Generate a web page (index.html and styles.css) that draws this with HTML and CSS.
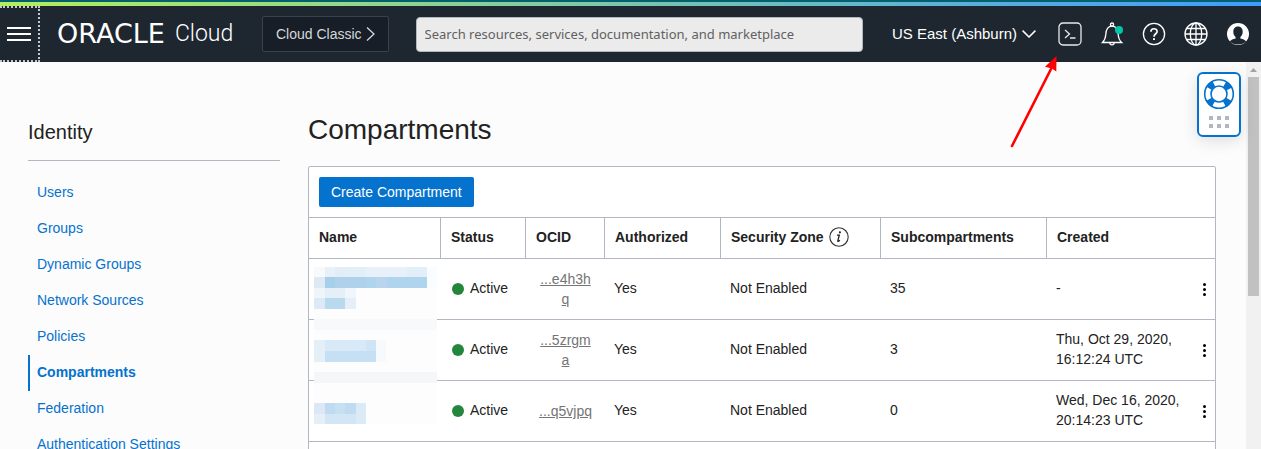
FILE: index.html
```html
<!DOCTYPE html>
<html lang="en">
<head>
<meta charset="utf-8">
<title>Compartments | Oracle Cloud</title>
<link rel="stylesheet" href="styles.css">
</head>
<body>
<div class="brand-strip"></div>
<header class="topbar">
  <button class="menu-button" type="button" aria-label="Open navigation menu">
    <svg width="24" height="14" viewBox="0 0 24 14"><path d="M0 1h24M0 7h24M0 13h24" stroke="#fff" stroke-width="2"/></svg>
  </button>
  <a class="logo" href="#"><span class="logo-oracle">ORACLE</span><span class="logo-cloud">Cloud</span></a>
  <button class="classic" type="button">Cloud Classic
    <svg width="9" height="14" viewBox="0 0 9 14"><path d="M1 .5l7 6.500-7 6.500" fill="none" stroke="#d5d8da" stroke-width="1.300"/></svg>
  </button>
  <input class="search" type="search" aria-label="Search" placeholder="Search resources, services, documentation, and marketplace">
  <button class="region" type="button">US East (Ashburn)
    <svg width="14" height="8" viewBox="0 0 14 8"><path d="M.6.6L7 7 13.400.6" fill="none" stroke="#fff" stroke-width="1.500"/></svg>
  </button>
  <nav class="tools" aria-label="Tools">
    <button type="button" aria-label="Cloud Shell">
      <svg width="24" height="24" viewBox="0 0 24 24" fill="none" stroke="#e8eaeb" stroke-width="1.300"><rect x="1" y="1" width="22" height="22" rx="4"/><path d="M7 8l4.500 4L7 16M12 16h5.500"/></svg>
    </button>
    <button type="button" aria-label="Notifications">
      <svg width="24" height="24" viewBox="0 0 24 24" fill="none" stroke="#fff" stroke-width="1.300"><circle cx="12" cy="2.600" r="1.600"/><path d="M2.500 20.500h19.200c-2.500-2.200-3.200-4-3.500-8C17.900 7.500 16.500 4.200 12 4.200S6.100 7.500 5.800 12.500c-.3 4-1 5.800-3.300 8z"/><path d="M9.800 20.800c.2 2.800 4.200 2.800 4.400 0"/><circle cx="19" cy="8" r="4" fill="#00c7a8" stroke="none"/></svg>
    </button>
    <button type="button" aria-label="Help">
      <svg width="24" height="24" viewBox="0 0 24 24" fill="none" stroke="#fff" stroke-width="1.300"><circle cx="12" cy="12" r="10.600"/><path d="M8.900 9.800c0-4 6.200-4 6.200-.3 0 2.300-3.100 2.300-3.100 5.300" stroke-width="1.700"/><path d="M12 16.200v1.900" stroke-width="2"/></svg>
    </button>
    <button type="button" aria-label="Language">
      <svg width="24" height="24" viewBox="0 0 24 24" fill="none" stroke="#fff" stroke-width="1.300"><circle cx="12" cy="12" r="11"/><ellipse cx="12" cy="12" rx="5.700" ry="11"/><path d="M12 1v22M1 12h22M2.500 6.500h19M2.500 17.500h19"/></svg>
    </button>
    <button type="button" aria-label="Profile">
      <svg width="24" height="24" viewBox="0 0 24 24"><circle cx="12" cy="12" r="11" fill="#fff"/><path d="M12 4.500c-3 0-4.700 2.200-4.700 5.200 0 2.600 1 4.200 2.300 5.300v1.500c-2.500.5-4.600 1.300-5.900 3C5.700 21.600 8.600 22.400 12 22.400s6.300-.8 8.300-2.900c-1.300-1.700-3.400-2.500-5.900-3V15c1.300-1.100 2.300-2.700 2.300-5.300 0-3-1.700-5.200-4.700-5.200z" fill="#1e2730"/></svg>
    </button>
  </nav>
</header>

<div class="viewport">
  <div class="page">
    <aside class="sidebar">
      <h2>Identity</h2>
      <nav aria-label="Identity">
        <a href="#">Users</a>
        <a href="#">Groups</a>
        <a href="#">Dynamic Groups</a>
        <a href="#">Network Sources</a>
        <a href="#">Policies</a>
        <a href="#" class="current" aria-current="page">Compartments</a>
        <a href="#">Federation</a>
        <a href="#">Authentication Settings</a>
      </nav>
    </aside>
    <main class="content">
      <h1>Compartments</h1>
      <section class="panel">
        <div class="actions"><button class="primary" type="button">Create Compartment</button></div>
        <table class="grid">
          <colgroup><col class="c-name"><col class="c-status"><col class="c-ocid"><col class="c-auth"><col class="c-zone"><col class="c-sub"><col><col class="c-menu"></colgroup>
          <thead>
            <tr>
              <th>Name</th><th>Status</th><th>OCID</th><th>Authorized</th>
              <th><span class="with-info">Security Zone <svg width="20" height="20" viewBox="0 0 20 20"><circle cx="10" cy="10" r="9.200" fill="none" stroke="#333" stroke-width="1.100"/><path d="M8 8.200h2.300l-1.500 5.600c-.2.900.9.700 2-.6" fill="none" stroke="#222" stroke-width="1.300"/><circle cx="10.900" cy="5.300" r="1.100" fill="#222"/></svg></span></th>
              <th>Subcompartments</th><th colspan="2">Created</th>
            </tr>
          </thead>
          <tbody>
            <tr>
              <td class="name">
                <svg class="masked" width="123" height="157" viewBox="0 0 123 157" shape-rendering="crispEdges" aria-hidden="true">
                  <path fill="#fdfdfd" d="M0 0h123v157H0z"/>
                  <path fill="#f8f9fa" d="M0 52h123v11H0zM0 0h11v10H0z"/>
                  <path fill="#f4f6f8" d="M0 105h123v11H0z"/>
                  <path fill="#e8f1fa" d="M11 0h10v10H11zM52 0h41v10H52z"/>
                  <path fill="#e4edf6" d="M21 0h10v10H21z"/>
                  <path fill="#e1eff9" d="M31 0h21v10H31zM93 0h20v10H93z"/>
                  <path fill="#f9fdff" d="M113 0h10v21h-10z"/>
                  <path fill="#ddeaf5" d="M0 10h11v11H0zM0 31h11v11H0z"/>
                  <path fill="#a6cfeb" d="M11 10h10v11H11z"/>
                  <path fill="#b0d1eb" d="M21 10h31v11H21z"/>
                  <path fill="#b9d4ed" d="M62 10h11v11H62z"/>
                  <path fill="#aed4ee" d="M52 10h10v11H52zM73 10h40v11H73z"/>
                  <path fill="#eff5fa" d="M0 21h11v10H0z"/>
                  <path fill="#e4eff8" d="M11 21h20v10H11zM31 31h11v11H31z"/>
                  <path fill="#f0f6fb" d="M31 21h11v10H31z"/>
                  <path fill="#b9d9ef" d="M11 31h20v11H11z"/>
                  <path fill="#e4eff8" d="M0 73h11v22H0zM0 147h11v10H0z"/>
                  <path fill="#d8eaf7" d="M11 73h41v11H11z"/>
                  <path fill="#cfe4f4" d="M52 73h10v11H52z"/>
                  <path fill="#c6dff3" d="M11 84h51v11H11z"/>
                  <path fill="#f6fafd" d="M62 73h10v22H62z"/>
                  <path fill="#dce9f5" d="M0 136h11v11H0z"/>
                  <path fill="#bfdaf1" d="M11 136h10v11H11zM31 136h11v11H31z"/>
                  <path fill="#c5e0f3" d="M21 136h10v11H21z"/>
                  <path fill="#d3e6f5" d="M11 147h31v10H11z"/>
                  <path fill="#daeaf6" d="M42 136h10v21H42z"/>
                </svg>
              </td>
              <td><span class="status">Active</span></td><td class="ocid"><a href="#">...e4h3h<br>q</a></td><td>Yes</td><td>Not Enabled</td><td>35</td><td>-</td>
              <td class="menu"><button type="button" aria-label="Row actions"><svg width="3" height="13" viewBox="0 0 3 13"><circle cx="1.500" cy="1.500" r="1.500"/><circle cx="1.500" cy="6.500" r="1.500"/><circle cx="1.500" cy="11.500" r="1.500"/></svg></button></td>
            </tr>
            <tr>
              <td></td>
              <td><span class="status">Active</span></td><td class="ocid"><a href="#">...5zrgm<br>a</a></td><td>Yes</td><td>Not Enabled</td><td>3</td><td>Thu, Oct 29, 2020,<br>16:12:24 UTC</td>
              <td class="menu"><button type="button" aria-label="Row actions"><svg width="3" height="13" viewBox="0 0 3 13"><circle cx="1.500" cy="1.500" r="1.500"/><circle cx="1.500" cy="6.500" r="1.500"/><circle cx="1.500" cy="11.500" r="1.500"/></svg></button></td>
            </tr>
            <tr>
              <td></td>
              <td><span class="status">Active</span></td><td class="ocid"><a href="#">...q5vjpq</a></td><td>Yes</td><td>Not Enabled</td><td>0</td><td>Wed, Dec 16, 2020,<br>20:14:23 UTC</td>
              <td class="menu"><button type="button" aria-label="Row actions"><svg width="3" height="13" viewBox="0 0 3 13"><circle cx="1.500" cy="1.500" r="1.500"/><circle cx="1.500" cy="6.500" r="1.500"/><circle cx="1.500" cy="11.500" r="1.500"/></svg></button></td>
            </tr>
            <tr><td></td><td></td><td></td><td></td><td></td><td></td><td></td><td></td></tr>
          </tbody>
        </table>
      </section>
    </main>
  </div>
  <div class="scrollbar" aria-hidden="true">
    <svg width="15" height="15" viewBox="0 0 15 15"><path d="M4 10l3.500-4L11 10z" fill="#a3a3a3"/></svg>
    <div class="thumb"></div>
  </div>
  <button class="support" type="button" aria-label="Support">
    <svg width="32" height="52" viewBox="0 0 32 52">
      <circle cx="16" cy="16" r="14.300" fill="#fff" stroke="#0572ce" stroke-width="1.600"/>
      <circle cx="16" cy="16" r="11.300" fill="none" stroke="#0572ce" stroke-width="6.500" stroke-dasharray="6.500 11.250" stroke-dashoffset="-5.600"/>
      <circle cx="16" cy="16" r="8" fill="#fff" stroke="#0572ce" stroke-width="1.600"/>
      <path fill="#b3b7c2" d="M6 38h4v4H6zM14 38h4v4h-4zM22 38h4v4h-4zM6 46h4v4H6zM14 46h4v4h-4zM22 46h4v4h-4z"/>
    </svg>
  </button>
</div>
<svg class="pointer" width="50" height="94" viewBox="0 0 50 94" aria-hidden="true"><path d="M3 90L42 13" stroke="#f00" stroke-width="2.600" stroke-linecap="round"/><path d="M47.500 0L47.300 15.500l-4.500-3-6.800-1.800z" fill="#f00"/></svg>
</body>
</html>
```
FILE: styles.css
```css
* { box-sizing: border-box; }

body {
  margin: 0;
  height: 100vh;
  overflow: hidden;
  position: relative;
  display: flex;
  flex-direction: column;
  background: #fcfcfc;
  color: #222;
  font: 14px/20px "Liberation Sans", Arial, sans-serif;
}

button { font: inherit; padding: 0; border: 0; background: none; cursor: pointer; }
svg { display: block; flex: none; }
a { color: #0572ce; text-decoration: none; }

.brand-strip {
  flex: none;
  height: 6px;
  border-top: 2px solid #03616f;
  background: linear-gradient(90deg, #b5ee5c, #3f9cff);
}

.topbar {
  flex: none;
  display: flex;
  align-items: center;
  height: 56px;
  padding-right: 11px;
  background: #1e2730;
  color: #fff;
}

.menu-button {
  display: flex;
  align-items: center;
  align-self: stretch;
  width: 40px;
  padding-left: 7px;
  border: 2px dotted #c3c8cc;
  border-left: 0;
}

.logo { display: flex; align-items: center; gap: 10px; width: 204px; padding-left: 17px; color: #fff; line-height: 28px; }
.logo-oracle { font-family: "DejaVu Sans", sans-serif; font-size: 27px; }
.logo-cloud { font-family: Roboto, sans-serif; font-weight: 300; font-size: 23px; }

.classic {
  display: flex;
  align-items: center;
  gap: 4px;
  height: 36px;
  padding: 0 13px;
  margin: 0 27px 0 18px;
  border: 1px solid #39424b;
  border-radius: 2px;
  background: #171e27;
  color: #d5d8da;
  white-space: nowrap;
}

.search {
  flex: 1;
  min-width: 0;
  height: 35px;
  padding: 0 8px;
  border: 1px solid #b0b8be;
  border-radius: 4px;
  background: #ebebeb;
  font: 13px/20px "Noto Sans", sans-serif;
}
.search::placeholder { color: #616161; opacity: 1; }

.region {
  display: flex;
  align-items: center;
  gap: 5px;
  margin: 0 22px 0 29px;
  color: #fff;
  font-size: 15px;
  white-space: nowrap;
}

.tools { display: flex; gap: 18px; }

.viewport { position: relative; flex: 1; min-height: 0; display: flex; overflow: hidden; }

.page { flex: 1; min-width: 0; display: flex; gap: 28px; padding: 0 30px 0 28px; }

.sidebar { flex: none; width: 252px; padding-top: 56px; }
.sidebar h2 { margin: 0 0 14px; padding-bottom: 14px; border-bottom: 1px solid #b3b7c2; font-size: 20px; font-weight: 400; line-height: 28px; }
.sidebar a { display: block; padding: 7px 7px 9px; border-left: 2px solid transparent; }
.sidebar .current { border-color: #0572ce; font-weight: 700; }

.content { flex: 1; min-width: 0; padding-top: 50px; }
h1 { margin: 0 0 18px; font-size: 28px; font-weight: 400; line-height: 36px; }

.panel { border: 1px solid #b3b7c2; border-radius: 2px; background: #fff; }
.actions { padding: 10px; }
.primary { display: block; height: 30px; padding: 0 12px; border-radius: 2px; background: #0572ce; color: #fff; }

.grid { width: 100%; table-layout: fixed; border-collapse: separate; border-spacing: 0; }
.c-name { width: 132px; }
.c-status { width: 85px; }
.c-ocid { width: 79px; }
.c-auth { width: 116px; }
.c-zone { width: 160px; }
.c-sub { width: 166px; }
.c-menu { width: 21px; }

.grid th {
  height: 42px;
  padding: 0 10px 2px;
  border: solid #b3b7c2;
  border-width: 1px 1px 1px 0;
  text-align: left;
  white-space: nowrap;
}
.grid th:last-child { border-right: 0; }
.grid td { height: 61px; padding: 0 9px 2px; border-bottom: 1px solid #b3b7c2; }
.grid .name { position: relative; }
.masked { position: absolute; left: 5px; top: 8px; }

.with-info { display: flex; align-items: center; gap: 5px; }
.status { display: flex; align-items: center; gap: 6px; padding-left: 2px; }
.status::before { content: ""; width: 12px; height: 12px; margin-top: 2px; border-radius: 50%; background: #23863d; }
.grid .ocid { padding: 0; text-align: center; }
.ocid a { color: #757575; text-decoration: underline; }
.grid .menu { padding: 0; }
.menu button { display: block; margin: auto; }

.scrollbar { flex: none; width: 15px; background: #f1f1f1; }
.thumb { height: 219px; margin: 0 2px; background: #c1c1c1; }

.support {
  position: absolute;
  top: 10px;
  right: 20px;
  padding: 4px 4px 5px;
  border: 2px solid #0572ce;
  border-radius: 6px;
  background: #fff;
  box-shadow: 0 4px 16px rgba(0, 0, 0, .12);
}

.pointer { position: absolute; top: 56px; right: 202px; }
```
